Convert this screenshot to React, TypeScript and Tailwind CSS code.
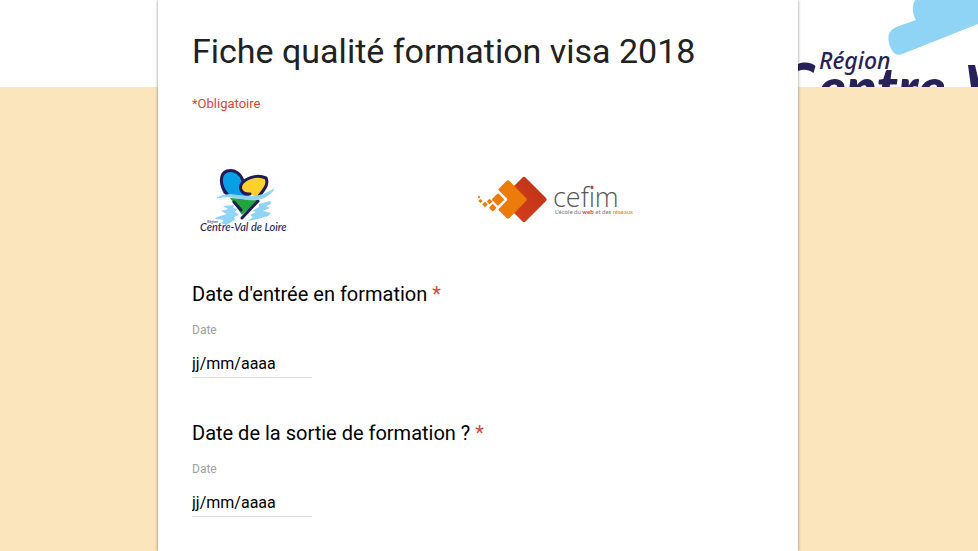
import React from "react";

function Banner() {
  return (
    <svg viewBox="0 0 180 87" className="block h-full w-[180px]" role="img" aria-label="Région Centre-Val de Loire">
      <path d="M117 0C113 8 115 15 118 20L101 26C92 29 89 34 91 43C93 51 97 56 103 54.500L180 24V0Z" fill="#8fd3f5" />
      <g fill="#27215b">
        <text x="21" y="69" fontSize="23" fontStyle="italic" fontWeight="500" className="font-['Noto_Sans',sans-serif]">
          Région
        </text>
        <path d="M0 64C7 61 14 63 17.500 66L15.500 73C10 69 5 69 0 71Z" />
        <text x="20" y="109" fontSize="57" fontStyle="italic" fontWeight="900" className="font-['Lato',sans-serif]">
          entre
        </text>
        <path d="M170 65H177L180 78V87H173Z" />
      </g>
    </svg>
  );
}

function RegionLogo() {
  return (
    <svg viewBox="0 0 96 76" className="block h-[76px] w-[96px]" role="img" aria-label="Région Centre-Val de Loire">
      <g fill="#8fd3f5">
        <path d="M23 46L34 45L33 48L37 49L35 52L39 55L34 57L35 60L26 65L21 63L24 60L15 59L17 57L27 54L21 51L28 49Z" />
        <path d="M59 44L70 41L71 44L66 46L70 48L63 51L71 53L68 56L58 59L48 61L53 57L50 55L56 52L52 51L59 47Z" />
      </g>
      <path d="M24 34C18 23 21 12 30 11C38 10 42 16 43 21L40 26L46 33L52 38Z" fill="#079fe5" />
      <path d="M51 34C41 35 38 26 44 21C51 15 61 15 66 18C69 24 63 33 57 38Z" fill="#fbd02f" />
      <path d="M30 38L59 40L42 55Z" fill="#1fa53b" />
      <path
        d="M27 34C20 26 19 14 27 11C35 9 41 14 43 21M50 34C41 35 38 27 43 22C50 16 59 15 66 18C69 24 64 30 59 36M34 42L41 50M58 41L42 58"
        fill="none"
        stroke="#211a58"
        strokeWidth="3"
        strokeLinecap="round"
        strokeLinejoin="round"
      />
      <path d="M17 38C27 32 38 36 48 36.500C58 37 66 34 74 29C68 38 58 41 47 39.500C35 38 27 35 17 38Z" fill="#8fd3f5" stroke="#8fd3f5" />
      <g fill="#27215b" fontStyle="italic">
        <text x="7" y="63" fontSize="4" className="font-['Lato',sans-serif]">Région</text>
        <text x="0" y="71" fontSize="11" fontWeight="500" className="font-['Lato',sans-serif]">Centre-Val de Loire</text>
      </g>
    </svg>
  );
}

function CefimLogo() {
  return (
    <svg viewBox="0 0 170 60" className="block h-[60px] w-[170px]" role="img" aria-label="Cefim, l'école du web et des réseaux">
      <defs>
        <linearGradient id="cefim-red" x1="0" x2="1" y1="1" y2="0">
          <stop offset="0" stopColor="#d8401c" />
          <stop offset="1" stopColor="#b93118" />
        </linearGradient>
      </defs>
      <path d="M34 18L44.500 7.500Q46 6 47.500 7.500L68 28Q69.500 29.500 68 31L47.500 51.500Q46 53 44.500 51.500L34 41Z" fill="url(#cefim-red)" />
      <path
        d="M28.500 11Q30 9.500 31.500 11L48 28Q49.500 29.500 48 31L31.500 48Q30 49.500 28.500 48L21 40.500Q20 39.500 21 38.500L28.500 31Q30 29.500 28.500 28L21 20.500Q20 19.500 21 18.500Z"
        fill="#ec7b08"
      />
      <g fill="#ec7b08">
        <rect x="15.500" y="25" width="9" height="9" rx="1" transform="rotate(45 20 29.500)" />
        <rect x="12" y="35" width="5.500" height="5.500" rx="1" transform="rotate(45 14.750 37.750)" />
        <rect x="9.500" y="29.500" width="4" height="4" transform="rotate(45 11.500 31.500)" />
        <rect x="5" y="32.500" width="4" height="4" transform="rotate(45 7 34.500)" />
        <rect x="1" y="29.500" width="3" height="3" transform="rotate(45 2.500 31)" />
        <rect x="0" y="26" width="2" height="2" transform="rotate(45 1 27)" />
      </g>
      <text x="75" y="37" fontSize="27" fontWeight="300" fill="#575756" className="font-['Open_Sans',sans-serif]">cefim</text>
      <circle cx="114" cy="17" r="1.500" fill="#d8401c" />
      <text x="77" y="44" fontSize="6" fill="#777" className="font-['Lato',sans-serif]">
        L'école du <tspan fill="#d8401c" fontWeight="700">web</tspan> et des <tspan fill="#ec7b08">réseaux</tspan>
      </text>
    </svg>
  );
}

function DateQuestion({ id, title }: { id: string; title: string }) {
  return (
    <section className="flex flex-col items-start">
      <h2 id={`${id}-title`} className="text-xl leading-7 text-black">
        {title} <span className="text-[#db4437]">*</span>
      </h2>
      <label htmlFor={id} className="mt-3 text-xs leading-5 text-[#a0a0a0]">
        Date
      </label>
      <input
        id={id}
        type="text"
        required
        aria-describedby={`${id}-title`}
        placeholder="jj/mm/aaaa"
        className="mt-2.5 h-7 w-[120px] border-b border-[#dcdcdc] bg-transparent p-0 text-base text-black outline-none placeholder:text-black focus:border-[#db4437]"
      />
    </section>
  );
}

export default function App() {
  return (
    <div className="grid min-h-screen grid-cols-[158fr_minmax(0,640px)_180fr] overflow-hidden bg-[#fbe5bc] font-[Roboto,sans-serif]">
      <div className="h-[87px] bg-white" />
      <main className="relative z-10 bg-white px-[34px] pt-7 shadow-[0_0_3px_rgba(0,0,0,0.45)]">
        <h1 className="text-[34px] leading-[46px] text-[#212121]">Fiche qualité formation visa 2018</h1>
        <p className="mt-5 text-[13px] leading-5 text-[#db4437]">*Obligatoire</p>
        <div className="mt-[46px] grid grid-cols-2">
          <div className="pl-2">
            <RegionLogo />
          </div>
          <div className="pt-2.5">
            <CefimLogo />
          </div>
        </div>
        <form className="mt-11 flex flex-col gap-[41px]">
          <DateQuestion id="date-entree" title="Date d'entrée en formation" />
          <DateQuestion id="date-sortie" title="Date de la sortie de formation ?" />
        </form>
      </main>
      <div className="h-[87px] overflow-hidden bg-white">
        <Banner />
      </div>
    </div>
  );
}
